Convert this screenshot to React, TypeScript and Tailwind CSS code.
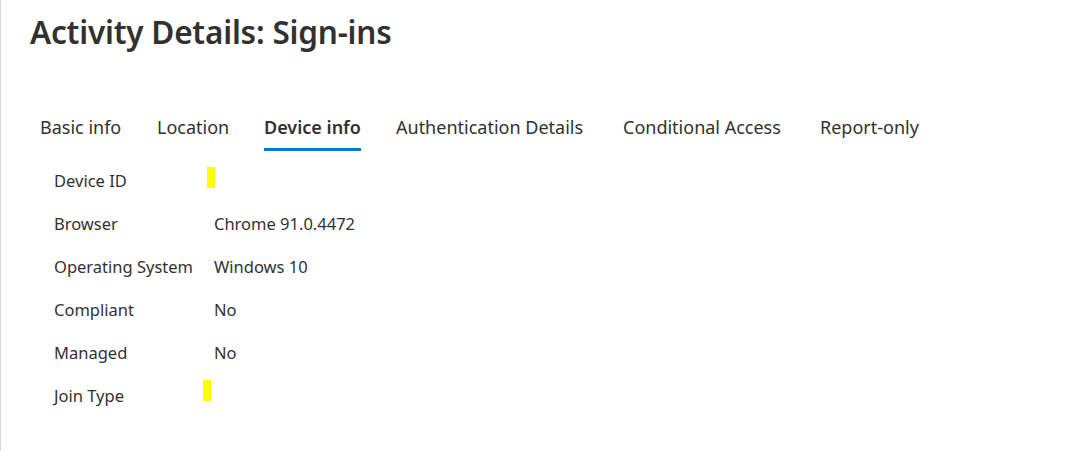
import React from "react";

const tabs = [
  { label: "Basic info", w: "w-[117px]" },
  { label: "Location", w: "w-[107px]" },
  { label: "Device info", w: "w-[132px]", active: true },
  { label: "Authentication Details", w: "w-[227px]" },
  { label: "Conditional Access", w: "w-[197px]" },
  { label: "Report-only", w: "w-[120px]" },
];

const rows: { label: string; value?: string; mark?: string }[] = [
  { label: "Device ID", mark: "ml-[-7px] -translate-y-[4px]" },
  { label: "Browser", value: "Chrome 91.0.4472" },
  { label: "Operating System", value: "Windows 10" },
  { label: "Compliant", value: "No" },
  { label: "Managed", value: "No" },
  { label: "Join Type", mark: "ml-[-11px] -translate-y-[6px]" },
];

export default function App() {
  return (
    <div
      className="w-[1079px] h-[451px] bg-white text-[#323130] border-l border-[#d8dce0] overflow-hidden"
      style={{ fontFamily: '"Noto Sans", "Open Sans", sans-serif' }}
    >
      <h1 className="pl-[29px] pt-[12px] text-[31.5px] leading-[40px] font-semibold tracking-[-0.2px]">
        Activity Details: Sign-ins
      </h1>
      <div className="flex pl-[39px] mt-[58px]">
        {tabs.map((t) => (
          <div key={t.label} className={`flex ${t.w}`}>
            <div className="flex flex-col">
              <span
                className={`text-[18px] leading-[34px] whitespace-nowrap ${
                  t.active ? "font-semibold" : ""
                }`}
              >
                {t.label}
              </span>
              <div
                className={`h-[3px] mt-[4px] ${t.active ? "bg-[#0078d4]" : "bg-transparent"}`}
              />
            </div>
          </div>
        ))}
      </div>
      <div className="pl-[53px] mt-[9px] flex flex-col">
        {rows.map((r) => (
          <div key={r.label} className="flex items-center h-[43px] text-[16.5px]">
            <span className="w-[160px] whitespace-nowrap">{r.label}</span>
            {r.mark ? (
              <span className={`w-[8px] h-[21px] bg-[#ffff00] ${r.mark}`} />
            ) : (
              <span className="whitespace-nowrap">{r.value}</span>
            )}
          </div>
        ))}
      </div>
    </div>
  );
}
